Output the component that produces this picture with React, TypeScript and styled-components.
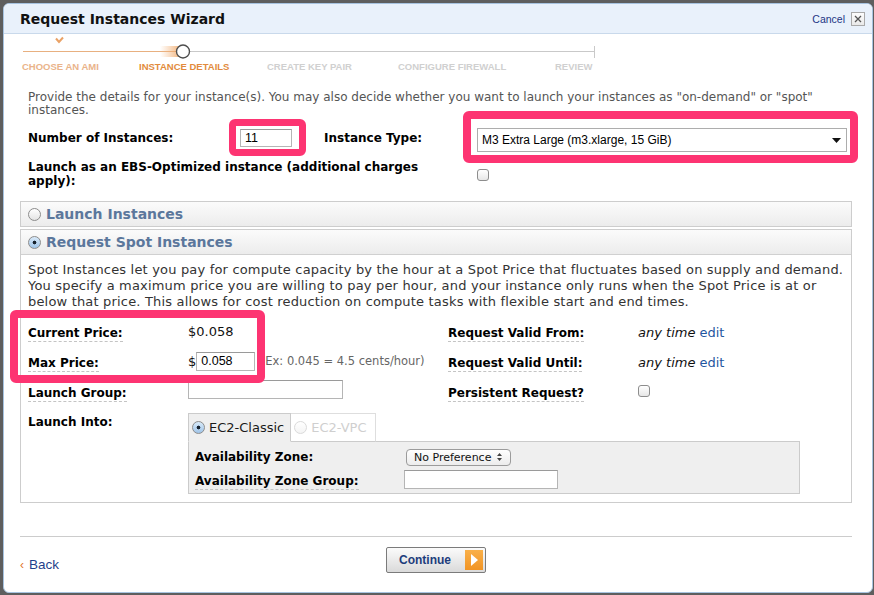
import React from "react";
import styled, { createGlobalStyle } from "styled-components";

const VERDANA = `"DejaVu Sans", Verdana, sans-serif`;
const TAHOMA = `"Liberation Sans", Tahoma, Arial, sans-serif`;
const PINK = "#fd3472";

const GlobalStyle = createGlobalStyle`
    html, body {
        margin: 0;
        padding: 0;
        background: #5e5e5e;
    }
    body {
        font-family: ${VERDANA};
    }
`;

const Dialog = styled.div`
    box-sizing: border-box;
    margin: 3px 0 0 3px;
    width: 870px;
    height: 590px;
    background: #fff;
    border: 1px solid #a7c3e0;
    border-radius: 6px;
    overflow: hidden;
    display: flex;
    flex-direction: column;
`;

const Header = styled.div`
    height: 29px;
    flex-shrink: 0;
    border-bottom: 1px solid #c9d9eb;
    background: #e9f1fb;
    display: flex;
    align-items: center;
    padding: 0 7px 0 16px;
`;

const Title = styled.h1`
    margin: 0;
    flex: 1;
    font: bold 14px ${VERDANA};
    color: #111;
`;

const CancelLink = styled.a`
    font: 10.5px ${TAHOMA};
    color: #1c3684;
    margin-right: 6px;
`;

const CloseBox = styled.span`
    box-sizing: border-box;
    width: 14px;
    height: 14px;
    border: 1px solid #a9a9a9;
    background: linear-gradient(#fdfdfd, #e9e9e9);
    display: flex;
    align-items: center;
    justify-content: center;
`;

const Content = styled.div`
    flex: 1;
    display: flex;
    flex-direction: column;
    padding: 0 20px 0 16px;
`;

const StepTrack = styled.svg`
    display: block;
    width: 580px;
    height: 27px;
`;

const StepLabels = styled.div`
    display: grid;
    grid-template-columns: 117px 128px 131px 157px auto;
    margin-left: 2px;
    width: 572px;
    height: 12px;
`;

const StepLabel = styled.span<{ $state: "done" | "active" | "todo" }>`
    font: bold 9.5px ${TAHOMA};
    line-height: 12px;
    white-space: nowrap;
    color: ${(p) => (p.$state === "done" ? "#eab48a" : p.$state === "active" ? "#e28b3d" : "#d0d0d0")};
`;

const Intro = styled.p`
    margin: 18px 0 0;
    padding-left: 8px;
    width: 800px;
    font-size: 12px;
    line-height: 13px;
    color: #555;
`;

const TopRow = styled.div`
    display: grid;
    grid-template-columns: 212px 84px 153px 370px;
    align-items: center;
    height: 28px;
    margin-top: 7px;
    padding-left: 8px;
`;

const Label = styled.span<{ $dashed?: boolean }>`
    font: bold 12px ${VERDANA};
    color: #000;
    white-space: nowrap;
    padding-bottom: 1px;
    border-bottom: ${(p) => (p.$dashed ? "1px dashed #c4c4c4" : "none")};
`;

const Annotated = styled.span<{ $offset?: number }>`
    position: relative;
    justify-self: start;
    display: inline-flex;
    margin-top: ${(p) => p.$offset ?? 0}px;
`;

const Highlight = styled.span<{ $t: number; $l: number; $w: number; $h: number; $line: number }>`
    box-sizing: border-box;
    position: absolute;
    top: ${(p) => p.$t}px;
    left: ${(p) => p.$l}px;
    width: ${(p) => p.$w}px;
    height: ${(p) => p.$h}px;
    border: ${(p) => p.$line}px solid ${PINK};
    border-radius: 6px;
    pointer-events: none;
`;

const TextInput = styled.span<{ $w: number; $h?: number }>`
    box-sizing: border-box;
    display: inline-flex;
    align-items: center;
    width: ${(p) => p.$w}px;
    height: ${(p) => p.$h ?? 19}px;
    padding-left: 4px;
    border: 1px solid #b5b5b5;
    border-top-color: #9a9a9a;
    background: #fff;
    font: 12.5px ${TAHOMA};
    color: #000;
`;

const SelectBox = styled.span`
    box-sizing: border-box;
    width: 370px;
    height: 24px;
    display: flex;
    align-items: center;
    justify-content: space-between;
    padding: 0 5px 0 4px;
    border: 1px solid #adadad;
    background: #fff;
    font: 12px ${TAHOMA};
    color: #000;
`;

const EbsRow = styled.div`
    display: grid;
    grid-template-columns: 449px auto;
    margin-top: 8px;
    padding-left: 8px;
`;

const WrapLabel = styled.span`
    font: bold 12px ${VERDANA};
    line-height: 14px;
    max-width: 400px;
`;

const Checkbox = styled.span<{ $top?: number }>`
    box-sizing: border-box;
    display: inline-block;
    width: 12px;
    height: 12px;
    margin-top: ${(p) => p.$top ?? 0}px;
    border: 1px solid #8d8d8d;
    border-radius: 3px;
    background: linear-gradient(#fff, #e7e7e7);
`;

const Panel = styled.div<{ $gap: number }>`
    margin-top: ${(p) => p.$gap}px;
    border: 1px solid #cdcdcd;
`;

const PanelHeader = styled.div<{ $open?: boolean }>`
    height: 24px;
    display: flex;
    align-items: center;
    gap: 5px;
    padding-left: 7px;
    background: linear-gradient(#fbfbfb, #ececec);
    border-bottom: ${(p) => (p.$open ? "1px solid #d0d0d0" : "none")};
    font: bold 14px ${VERDANA};
    color: #5b779c;
`;

const Radio = styled.span<{ $checked?: boolean; $disabled?: boolean }>`
    box-sizing: border-box;
    display: inline-block;
    flex-shrink: 0;
    width: 13px;
    height: 13px;
    border-radius: 50%;
    border: 1px solid ${(p) => (p.$disabled ? "#dadada" : "#8c8c8c")};
    background: ${(p) =>
        p.$checked
            ? "radial-gradient(circle, #17222e 0 1.6px, transparent 2.2px), linear-gradient(#d9eaf9, #9fc4e8)"
            : p.$disabled
            ? "linear-gradient(#fff, #f4f4f4)"
            : "linear-gradient(#fff, #e4e4e4)"};
`;

const PanelBody = styled.div`
    padding: 7px 7px 8px;
`;

const Blurb = styled.p`
    margin: 0;
    font-size: 13px;
    line-height: 16px;
    letter-spacing: 0.18px;
    color: #333;
`;

const SpotForm = styled.div`
    position: relative;
    margin-top: 6px;
    display: grid;
    grid-template-columns: 160px 260px 190px 1fr;
    grid-template-rows: 30px 30px 30px auto;
    align-items: center;
`;

const Value = styled.span`
    display: inline-flex;
    align-items: center;
    font-size: 13px;
    color: #111;
`;

const Hint = styled.span`
    margin-left: 10px;
    font-size: 11.5px;
    color: #666;
`;

const Italic = styled.em`
    font-size: 13px;
    color: #111;
    margin-right: 4px;
`;

const EditLink = styled.a`
    font-size: 13px;
    color: #1f56a0;
`;

const TopLabel = styled.div`
    align-self: start;
    line-height: 30px;
`;

const LaunchInto = styled.div`
    grid-column: 2 / span 3;
    align-self: start;
    margin-top: 7px;
    width: 612px;
`;

const TabBar = styled.div`
    display: flex;
    margin-bottom: -1px;
`;

const Tab = styled.span<{ $active?: boolean }>`
    position: relative;
    z-index: ${(p) => (p.$active ? 1 : 0)};
    box-sizing: border-box;
    height: 29px;
    display: flex;
    align-items: center;
    gap: 4px;
    padding: 0 ${(p) => (p.$active ? 6 : 8)}px 1px 3px;
    border: 1px solid ${(p) => (p.$active ? "#cbcbcb" : "#dedede")};
    border-bottom: ${(p) => (p.$active ? "1px solid #efefef" : "1px solid #cbcbcb")};
    border-left-width: ${(p) => (p.$active ? 1 : 0)}px;
    background: ${(p) => (p.$active ? "#efefef" : "#fff")};
    font: 13px ${VERDANA};
    color: ${(p) => (p.$active ? "#1a1a1a" : "#cfcfcf")};
`;

const TabPanel = styled.div`
    display: grid;
    grid-template-columns: 209px auto;
    grid-auto-rows: 22px;
    align-items: center;
    padding: 4px 6px 3px;
    border: 1px solid #cbcbcb;
    background: #efefef;
`;

const MacSelect = styled.span`
    box-sizing: border-box;
    margin-left: 2px;
    width: 105px;
    height: 17px;
    display: flex;
    align-items: center;
    justify-content: space-between;
    padding: 0 8px 0 7px;
    border: 1px solid #9b9b9b;
    border-radius: 4px;
    background: linear-gradient(#fff, #ececec);
    font: 11px ${VERDANA};
    color: #111;
`;

const Divider = styled.div`
    margin-top: 33px;
    border-top: 1px solid #cccccc;
`;

const Footer = styled.div`
    display: grid;
    grid-template-columns: 1fr auto 1fr;
    padding-top: 10px;
`;

const BackLink = styled.a`
    align-self: start;
    margin-top: 10px;
    display: flex;
    align-items: center;
    gap: 5px;
    font: 13.5px ${TAHOMA};
    line-height: 16px;
    color: #1f3f8c;
`;

const BackArrow = styled.span`
    color: #e2762c;
    font-size: 12px;
`;

const ContinueButton = styled.button`
    box-sizing: border-box;
    width: 100px;
    height: 26px;
    display: flex;
    align-items: center;
    justify-content: space-between;
    padding: 0 2px 0 12px;
    border: 1px solid #7b7b7b;
    border-radius: 2px;
    background: linear-gradient(#fbfbfb, #dadada);
    font: bold 12px ${TAHOMA};
    color: #1d3d7c;
`;

const GoSquare = styled.span`
    width: 18px;
    height: 20px;
    display: flex;
    align-items: center;
    justify-content: center;
    background: linear-gradient(#f9b04a, #f19424);
`;

const steps: { label: string; state: "done" | "active" | "todo" }[] = [
    { label: "CHOOSE AN AMI", state: "done" },
    { label: "INSTANCE DETAILS", state: "active" },
    { label: "CREATE KEY PAIR", state: "todo" },
    { label: "CONFIGURE FIREWALL", state: "todo" },
    { label: "REVIEW", state: "todo" },
];

const Stepper = (): JSX.Element => (
    <div>
        <StepTrack viewBox="0 0 580 27">
            <defs>
                <linearGradient id="glow" x1="0" x2="1" y1="0" y2="0">
                    <stop offset="0" stopColor="#f3b37a" stopOpacity="0" />
                    <stop offset="1" stopColor="#f0a868" stopOpacity="0.85" />
                </linearGradient>
            </defs>
            <polyline points="36,4.5 39,8 43,3.5" fill="none" stroke="#eaa266" strokeWidth="2" />
            <line x1="3" y1="17.5" x2="158" y2="17.5" stroke="#e8b080" strokeWidth="1" />
            <rect x="140" y="12" width="20" height="11" fill="url(#glow)" />
            <line x1="170" y1="17.5" x2="574" y2="17.5" stroke="#c9c9c9" strokeWidth="1" />
            <line x1="574.5" y1="12" x2="574.5" y2="24" stroke="#c9c9c9" strokeWidth="1" />
            <circle cx="163" cy="17.5" r="6.5" fill="#fff" stroke="#4e4e4e" strokeWidth="1.4" />
        </StepTrack>
        <StepLabels>
            {steps.map((s) => (
                <StepLabel key={s.label} $state={s.state}>
                    {s.label}
                </StepLabel>
            ))}
        </StepLabels>
    </div>
);

const App = (): JSX.Element => {
    return (
        <>
            <GlobalStyle />
            <Dialog>
                <Header>
                    <Title>Request Instances Wizard</Title>
                    <CancelLink>Cancel</CancelLink>
                    <CloseBox>
                        <svg width="8" height="8" viewBox="0 0 8 8">
                            <path d="M1 1L7 7M7 1L1 7" stroke="#555" strokeWidth="1.3" />
                        </svg>
                    </CloseBox>
                </Header>
                <Content>
                    <Stepper />
                    <Intro>
                        Provide the details for your instance(s). You may also decide whether you want to launch your
                        instances as "on-demand" or "spot" instances.
                    </Intro>
                    <TopRow>
                        <Label>Number of Instances:</Label>
                        <Annotated>
                            <TextInput $w={52} $h={18}>11</TextInput>
                            <Highlight $t={-10} $l={-11} $w={77} $h={37} $line={7} />
                        </Annotated>
                        <Label>Instance Type:</Label>
                        <Annotated $offset={4}>
                            <SelectBox>
                                M3 Extra Large (m3.xlarge, 15 GiB)
                                <svg width="9" height="5" viewBox="0 0 9 5">
                                    <path d="M0 0H9L4.5 5Z" fill="#111" />
                                </svg>
                            </SelectBox>
                            <Highlight $t={-17} $l={-14} $w={395} $h={52} $line={8} />
                        </Annotated>
                    </TopRow>
                    <EbsRow>
                        <WrapLabel>Launch as an EBS-Optimized instance (additional charges apply):</WrapLabel>
                        <span>
                            <Checkbox $top={9} />
                        </span>
                    </EbsRow>
                    <Panel $gap={13}>
                        <PanelHeader>
                            <Radio />
                            Launch Instances
                        </PanelHeader>
                    </Panel>
                    <Panel $gap={2}>
                        <PanelHeader $open>
                            <Radio $checked />
                            Request Spot Instances
                        </PanelHeader>
                        <PanelBody>
                            <Blurb>
                                Spot Instances let you pay for compute capacity by the hour at a Spot Price that
                                fluctuates based on supply and demand. You specify a maximum price you are willing to
                                pay per hour, and your instance only runs when the Spot Price is at or below that
                                price. This allows for cost reduction on compute tasks with flexible start and end
                                times.
                            </Blurb>
                            <SpotForm>
                                <div>
                                    <Label $dashed>Current Price:</Label>
                                </div>
                                <Value>$0.058</Value>
                                <div>
                                    <Label $dashed>Request Valid From:</Label>
                                </div>
                                <div>
                                    <Italic>any time</Italic>
                                    <EditLink>edit</EditLink>
                                </div>

                                <div>
                                    <Label $dashed>Max Price:</Label>
                                </div>
                                <Value>
                                    $<TextInput $w={59}>0.058</TextInput>
                                    <Hint>Ex: 0.045 = 4.5 cents/hour)</Hint>
                                </Value>
                                <div>
                                    <Label $dashed>Request Valid Until:</Label>
                                </div>
                                <div>
                                    <Italic>any time</Italic>
                                    <EditLink>edit</EditLink>
                                </div>

                                <div>
                                    <Label $dashed>Launch Group:</Label>
                                </div>
                                <div>
                                    <TextInput $w={155} />
                                </div>
                                <div>
                                    <Label $dashed>Persistent Request?</Label>
                                </div>
                                <div>
                                    <Checkbox $top={3} />
                                </div>

                                <TopLabel>
                                    <Label>Launch Into:</Label>
                                </TopLabel>
                                <LaunchInto>
                                    <TabBar>
                                        <Tab $active>
                                            <Radio $checked />
                                            EC2-Classic
                                        </Tab>
                                        <Tab>
                                            <Radio $disabled />
                                            EC2-VPC
                                        </Tab>
                                    </TabBar>
                                    <TabPanel>
                                        <Label>Availability Zone:</Label>
                                        <MacSelect>
                                            No Preference
                                            <svg width="5" height="8" viewBox="0 0 5 8">
                                                <path d="M0 3H5L2.5 0Z M0 5H5L2.5 8Z" fill="#444" />
                                            </svg>
                                        </MacSelect>
                                        <div>
                                            <Label $dashed>Availability Zone Group:</Label>
                                        </div>
                                        <TextInput $w={154} />
                                    </TabPanel>
                                </LaunchInto>
                                <Highlight $t={-6} $l={-18} $w={255} $h={73} $line={8} />
                            </SpotForm>
                        </PanelBody>
                    </Panel>
                    <Divider />
                    <Footer>
                        <BackLink>
                            <BackArrow>‹</BackArrow>
                            Back
                        </BackLink>
                        <ContinueButton>
                            Continue
                            <GoSquare>
                                <svg width="7" height="12" viewBox="0 0 7 12">
                                    <path d="M0 0L7 6L0 12Z" fill="#fff" />
                                </svg>
                            </GoSquare>
                        </ContinueButton>
                        <span />
                    </Footer>
                </Content>
            </Dialog>
        </>
    );
};

export default App;
